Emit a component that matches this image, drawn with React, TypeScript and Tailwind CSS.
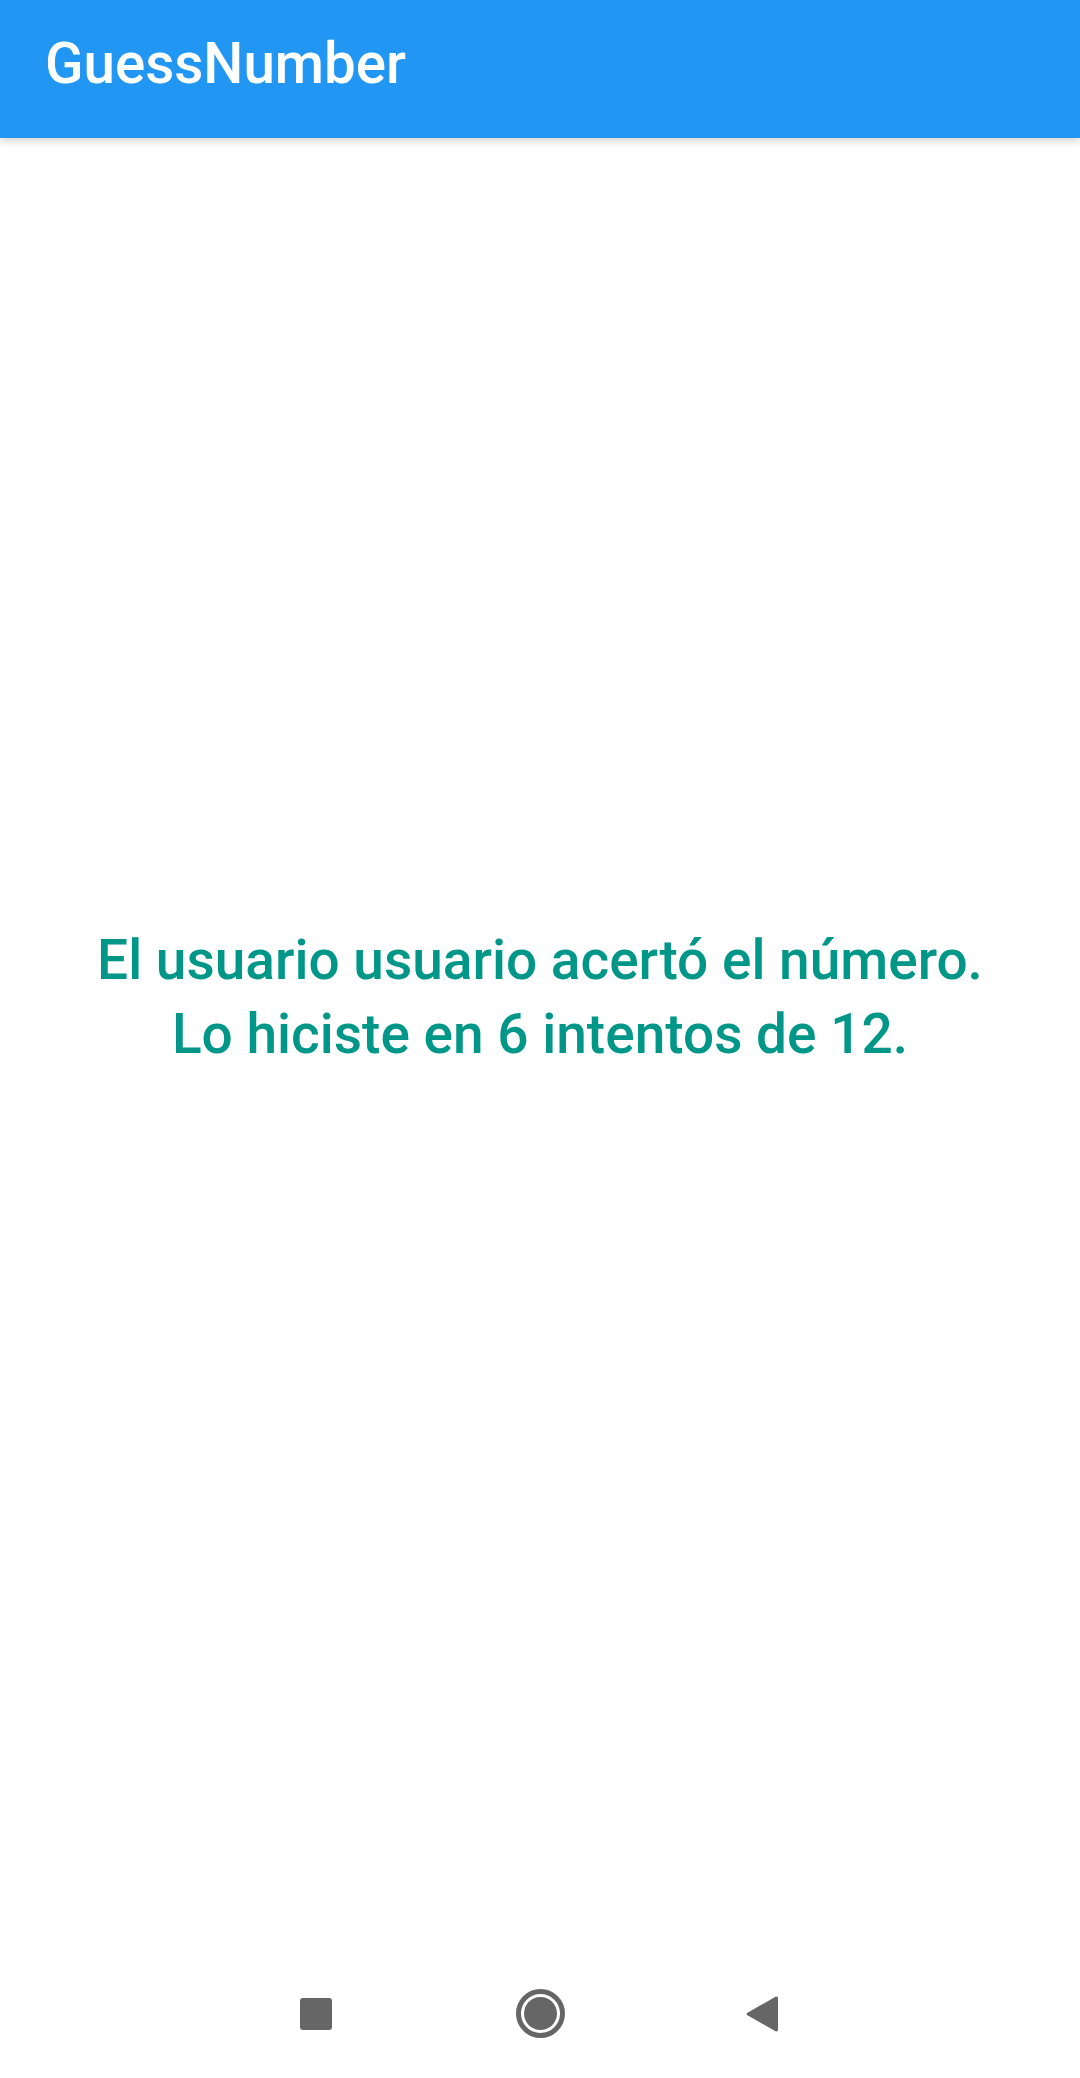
const App = () => {
  return (
    <div
      className="flex h-[2078px] w-full flex-col bg-white"
      style={{ fontFamily: 'Roboto, "Noto Sans", sans-serif' }}
    >
      {/* App bar */}
      <header className="relative z-10 flex h-[138px] shrink-0 items-center bg-[#2196F3] pl-[45px] shadow-[0_3px_8px_rgba(0,0,0,0.18)]">
        <h1 className="pb-[10px] text-[56.5px] font-medium leading-none text-white">GuessNumber</h1>
      </header>

      {/* Result message */}
      <main className="flex flex-1 flex-col items-center pt-[785px]">
        <p className="text-center text-[55px] font-medium leading-[74px] text-[#009688]">
          El usuario usuario acertó el número.
          <br />
          Lo hiciste en 6 intentos de 12.
        </p>
      </main>

      {/* Android navigation bar */}
      <nav className="flex h-[129px] shrink-0 items-center justify-center">
        <div className="flex w-[224px] justify-center">
          <div className="h-[32px] w-[32px] rounded-[3px] bg-[#666666]" />
        </div>
        <div className="flex w-[224px] justify-center">
          <div className="flex h-[49px] w-[49px] items-center justify-center rounded-full border-[5px] border-[#666666]">
            <div className="h-[33px] w-[33px] rounded-full bg-[#666666]" />
          </div>
        </div>
        <div className="flex w-[224px] justify-center">
          <svg width="34" height="38" viewBox="0 0 34 38" className="-ml-[4px]">
            <path
              d="M31 1.5 Q33 1 33 3.5 L33 34.5 Q33 37 31 36.5 L2.5 20.2 Q0.5 19 2.5 17.8 Z"
              fill="#666666"
            />
          </svg>
        </div>
      </nav>
    </div>
  );
};

export default App;
